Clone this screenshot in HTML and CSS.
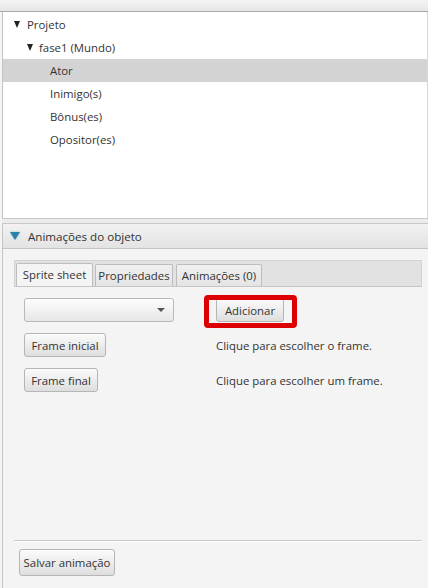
FILE: index.html
```html
<!DOCTYPE html>
<html>
<head>
<meta charset="utf-8">
<link rel="stylesheet" href="styles.css">
</head>
<body>
<div class="app">
  <div class="topbar"></div>
  <div class="tree">
    <div class="row lvl0"><span class="tri"></span>Projeto</div>
    <div class="row lvl1"><span class="tri"></span>fase1 (Mundo)</div>
    <div class="row lvl2 selected">Ator</div>
    <div class="row lvl2">Inimigo(s)</div>
    <div class="row lvl2">Bônus(es)</div>
    <div class="row lvl2">Opositor(es)</div>
  </div>
  <div class="divider"></div>
  <div class="pane">
    <div class="pane-header"><span class="bluetri"></span>Animações do objeto</div>
    <div class="pane-body">
      <div class="tabpane">
        <div class="tabs">
          <div class="tab active t1">Sprite sheet</div>
          <div class="tab t2">Propriedades</div>
          <div class="tab t3">Animações (0)</div>
        </div>
        <div class="tab-content">
          <div class="form">
            <div class="combo"><span class="arrow"></span></div>
            <div class="add-cell">
              <button class="btn add">Adicionar</button>
              <div class="highlight"></div>
            </div>
            <div><button class="btn w-ini">Frame inicial</button></div>
            <div class="label">Clique para escolher o frame.</div>
            <div><button class="btn w-fin">Frame final</button></div>
            <div class="label">Clique para escolher um frame.</div>
          </div>
        </div>
        <div class="sep"></div>
        <div class="footer">
          <button class="btn save">Salvar animação</button>
        </div>
      </div>
    </div>
  </div>
</div>
</body>
</html>
```

FILE: styles.css
```css
html, body {
  margin: 0;
  padding: 0;
}
body {
  width: 428px;
  height: 588px;
  overflow: hidden;
  background: #f4f4f4;
  font-family: "Open Sans", "Noto Sans", sans-serif;
  font-size: 11.4px;
  color: #333;
}
.app {
  display: flex;
  flex-direction: column;
  height: 588px;
}
.topbar {
  height: 11px;
  background: linear-gradient(#f4f4f4, #e6e6e6);
  border-bottom: 1px solid #a9a9a9;
}
.tree {
  height: 206px;
  margin-left: 2px;
  border-left: 1px solid #c4c4c4;
  border-right: 1px solid #d8d8d8;
  background: #fff;
  padding-top: 1px;
  box-sizing: border-box;
}
.row {
  height: 23px;
  line-height: 23px;
  white-space: nowrap;
  display: flex;
  align-items: center;
}
.row.selected {
  background: #d3d3d3;
}
.lvl0 { padding-left: 10px; }
.lvl1 { padding-left: 23px; }
.lvl2 { padding-left: 47px; }
.tri {
  width: 0;
  height: 0;
  border-left: 3.5px solid transparent;
  border-right: 3.5px solid transparent;
  border-top: 7px solid #222;
  margin-right: 6px;
  margin-left: 1px;
}
.lvl0 .tri { margin-right: 7px; }
.divider {
  height: 6px;
  background: #ececec;
  border-top: 1px solid #c8c8c8;
  border-bottom: 1px solid #c8c8c8;
  box-sizing: border-box;
  margin-left: 2px;
}
.pane {
  flex: 1;
  display: flex;
  flex-direction: column;
  margin-left: 2px;
  border-left: 1px solid #c4c4c4;
}
.pane-header {
  height: 25px;
  background: linear-gradient(#f2f2f2, #e3e3e3);
  border-bottom: 1px solid #c4c4c4;
  display: flex;
  align-items: center;
  padding-left: 7px;
  font-size: 11.6px;
  box-sizing: border-box;
}
.bluetri {
  width: 0;
  height: 0;
  border-left: 5px solid transparent;
  border-right: 5px solid transparent;
  border-top: 8px solid #2d7fa6;
  margin-right: 8px;
  filter: drop-shadow(0 0 1px #7fc5e6);
}
.pane-body {
  flex: 1;
  padding: 11px 6px 0 11px;
  display: flex;
  flex-direction: column;
}
.tabpane {
  flex: 1;
  display: flex;
  flex-direction: column;
}
.tabs {
  height: 27px;
  background: #e2e2e2;
  border: 1px solid #d2d2d2;
  border-bottom: 1px solid #c6c6c6;
  box-sizing: border-box;
  display: flex;
  align-items: flex-end;
  padding-left: 1px;
  gap: 2px;
}
.tab {
  height: 22px;
  line-height: 21px;
  text-align: center;
  border: 1px solid #bdbdbd;
  border-bottom: none;
  border-radius: 2px 2px 0 0;
  background: linear-gradient(#f0f0f0, #e4e4e4);
  box-sizing: border-box;
  white-space: nowrap;
}
.t1 { width: 77px; }
.t2 { width: 78px; }
.t3 { width: 86px; margin-left: 1px; }
.tab.active {
  background: #f4f4f4;
  height: 23px;
}
.tab-content {
  flex: 1;
  padding: 11px 0 0 10px;
}
.form {
  display: grid;
  grid-template-columns: 192px auto;
  row-gap: 11px;
  align-items: center;
}
.combo {
  width: 150px;
  height: 24px;
  box-sizing: border-box;
  border: 1px solid #b8b8b8;
  border-radius: 3px;
  background: linear-gradient(#fdfdfd, #e6e6e6);
  display: flex;
  justify-content: flex-end;
  align-items: center;
  padding-right: 8px;
}
.arrow {
  width: 0;
  height: 0;
  border-left: 4px solid transparent;
  border-right: 4px solid transparent;
  border-top: 4px solid #555;
}
.add-cell {
  position: relative;
  height: 24px;
}
.btn {
  font-family: inherit;
  font-size: 11.4px;
  color: #333;
  height: 24px;
  padding: 0 7px;
  border: 1px solid #b5b5b5;
  border-radius: 3px;
  background: linear-gradient(#fbfbfb, #dedede);
  box-sizing: border-box;
  margin: 0;
  white-space: nowrap;
}
.btn.add {
  width: 68px;
  padding: 0;
}
.highlight {
  position: absolute;
  left: -12px;
  top: -3px;
  width: 93px;
  height: 33px;
  box-sizing: border-box;
  border: 5px solid #dd0000;
  border-radius: 4px;
}
.w-ini { width: 82px; padding: 0; }
.w-fin { width: 74px; padding: 0; }
.sep {
  height: 1px;
  background: #c8c8c8;
  border-bottom: 1px solid #fff;
  margin-bottom: 7px;
}
.footer {
  padding-left: 5px;
  padding-bottom: 12px;
}
.btn.save {
  height: 27px;
  width: 96px;
  padding: 0;
}
```
